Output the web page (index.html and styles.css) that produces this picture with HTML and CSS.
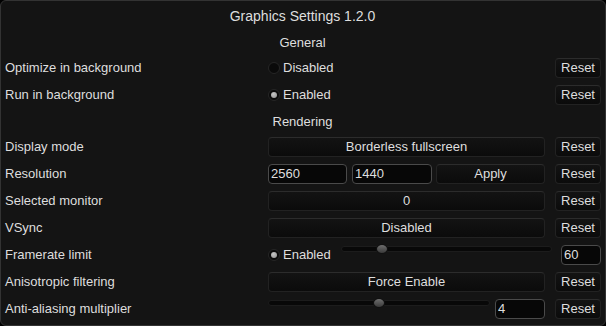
FILE: index.html
```html
<!DOCTYPE html>
<html lang="en">

<head>
    <meta charset="UTF-8">
    <title>Graphics Settings</title>
    <link rel="stylesheet" href="styles.css">
</head>

<body>
    <div class="window">
        <div class="title">Graphics Settings 1.2.0</div>

        <div class="header">General</div>
        <div class="row">
            <div class="label">Optimize in background</div>
            <div class="control">
                <span class="toggle"><span class="radio"></span>Disabled</span>
            </div>
            <button class="btn reset">Reset</button>
        </div>
        <div class="row">
            <div class="label">Run in background</div>
            <div class="control">
                <span class="toggle"><span class="radio on"></span>Enabled</span>
            </div>
            <button class="btn reset">Reset</button>
        </div>

        <div class="header">Rendering</div>
        <div class="row">
            <div class="label">Display mode</div>
            <div class="control">
                <button class="btn wide">Borderless fullscreen</button>
            </div>
            <button class="btn reset">Reset</button>
        </div>
        <div class="row">
            <div class="label">Resolution</div>
            <div class="control res">
                <input class="field w79" value="2560">
                <input class="field w80" value="1440">
                <button class="btn wide">Apply</button>
            </div>
            <button class="btn reset">Reset</button>
        </div>
        <div class="row">
            <div class="label">Selected monitor</div>
            <div class="control">
                <button class="btn wide">0</button>
            </div>
            <button class="btn reset">Reset</button>
        </div>
        <div class="row">
            <div class="label">VSync</div>
            <div class="control">
                <button class="btn wide">Disabled</button>
            </div>
            <button class="btn reset">Reset</button>
        </div>
        <div class="row">
            <div class="label">Framerate limit</div>
            <div class="control span">
                <span class="toggle fixed"><span class="radio on"></span>Enabled</span>
                <div class="slider"><span class="knob" style="left: 19%"></span></div>
                <input class="field w40" value="60">
            </div>
        </div>
        <div class="row">
            <div class="label">Anisotropic filtering</div>
            <div class="control">
                <button class="btn wide">Force Enable</button>
            </div>
            <button class="btn reset">Reset</button>
        </div>
        <div class="row">
            <div class="label">Anti-aliasing multiplier</div>
            <div class="control aa">
                <div class="slider"><span class="knob" style="left: 50%"></span></div>
                <input class="field w50" value="4">
            </div>
            <button class="btn reset">Reset</button>
        </div>
    </div>
</body>

</html>
```

FILE: styles.css
```css
* {
    box-sizing: border-box;
}

body {
    margin: 0;
    padding: 0;
    background-color: #000;
    font-family: 'Liberation Sans', Arial, sans-serif;
    font-size: 13px;
    color: #dedede;
}

.window {
    width: 606px;
    height: 326px;
    padding: 5px 4px 0 3px;
    background-color: #141414;
    border: 1px solid #333;
    border-radius: 6px;
}

.title {
    height: 20px;
    line-height: 20px;
    font-size: 14px;
    text-align: center;
}

.header {
    height: 20px;
    line-height: 20px;
    margin-top: 7px;
    margin-bottom: -2px;
    text-align: center;
}

.row {
    display: grid;
    grid-template-columns: 264px 1fr 46px;
    height: 20px;
    margin-top: 7px;
    line-height: 20px;
}

.label {
    padding-left: 1px;
    white-space: nowrap;
}

.control {
    display: flex;
    align-items: center;
    height: 20px;
    margin-right: 10px;
}

.control.span {
    grid-column: 2 / 4;
    margin-right: 0;
}

.control.res {
    gap: 5px;
}

.control.res .btn {
    margin-left: -1px;
}

.control.aa {
    gap: 5px;
}

.btn {
    height: 20px;
    padding: 0;
    font: inherit;
    color: #dedede;
    background: linear-gradient(#131313, #0b0b0b);
    border: 1px solid #222;
    border-top-color: #2c2c2c;
    border-radius: 4px;
    line-height: 18px;
}

.btn.wide {
    flex: 1;
}

.btn.reset {
    width: 46px;
}

.field {
    height: 20px;
    padding: 0 2px;
    font: inherit;
    color: #dedede;
    background-color: #070707;
    border: 1px solid #4a4a4a;
    border-radius: 4px;
    outline: none;
}

.w79 {
    width: 79px;
}

.w80 {
    width: 80px;
}

.w40 {
    width: 40px;
    margin-left: 9px;
}

.w50 {
    width: 50px;
}

.toggle {
    display: flex;
    align-items: center;
    gap: 3px;
}

.toggle.fixed {
    width: 73px;
}

.radio {
    position: relative;
    width: 12px;
    height: 12px;
    border-radius: 50%;
    background: #0a0a0a;
    border: 1px solid #262626;
}

.radio.on::after {
    content: '';
    position: absolute;
    left: 2px;
    top: 2px;
    width: 6px;
    height: 6px;
    border-radius: 50%;
    background: radial-gradient(circle at 40% 35%, #c8c8c8, #8a8a8a);
}

.slider {
    position: relative;
    flex: 1;
    height: 6px;
    margin-top: -12px;
    background: #080808;
    border: 1px solid #1c1c1c;
    border-radius: 3px;
}

.knob {
    position: absolute;
    top: -3px;
    width: 12px;
    height: 10px;
    margin-left: -6px;
    border-radius: 50%;
    background: linear-gradient(#6e6e6e, #3a3a3a);
    border: 1px solid #111;
}
```
